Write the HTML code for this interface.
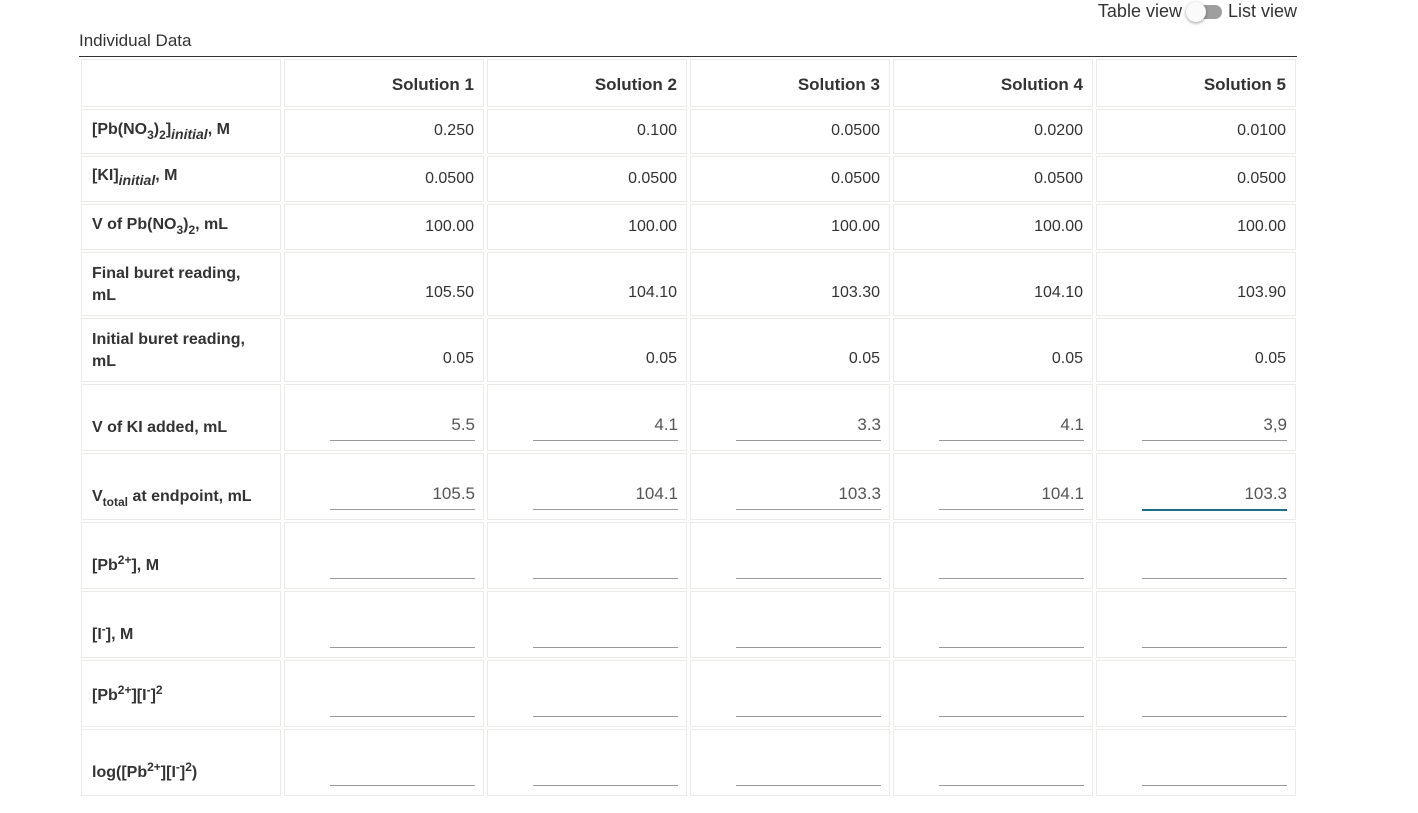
<!DOCTYPE html>
<html><head><meta charset="utf-8"><style>
body{margin:0;width:1418px;height:813px;background:#fff;font-family:"Liberation Sans",Roboto,sans-serif;color:#333;position:relative;overflow:hidden}
.top{position:absolute;top:1px;right:121px;font-size:18px;color:#333;display:flex;align-items:center}
.sw{display:inline-block;width:38px;height:20px;position:relative;margin:0 4px}
.sw .tr{position:absolute;left:6px;top:3px;width:30px;height:14px;border-radius:7px;background:#9e9e9e}
.sw .kn{position:absolute;left:0;top:0;width:20px;height:20px;border-radius:50%;background:#fafafa;box-shadow:0 1px 3px rgba(0,0,0,.4)}
.title{position:absolute;left:79px;top:31px;font-size:17px;color:#333}
.line{position:absolute;left:79px;top:56px;width:1218px;height:1px;background:#333}
table{position:absolute;left:78px;top:57px;border-collapse:separate;border-spacing:3px 2px;table-layout:fixed}
td{width:200px;box-sizing:border-box;border:1px solid #ecebe7;padding:0 9px 12px 10px;font-size:16px;line-height:20px;text-align:right;vertical-align:bottom;position:relative}
td.l{text-align:left;font-weight:bold;color:#333;vertical-align:middle;padding-bottom:0;padding-right:24px}
td.t{vertical-align:top;padding-top:10px;line-height:22px}
td.b{vertical-align:bottom;padding-bottom:12px}
th{width:200px;box-sizing:border-box;border:1px solid #ecebe7;text-align:right;padding:4px 9px 0 0;font-size:17px;font-weight:bold;color:#333}
.in{position:absolute;left:45px;right:8px;bottom:9px;height:28px;border-bottom:1px solid #999;text-align:right;color:#555;line-height:26px;font-size:17px}
.in.a{border-bottom:2px solid #1a6e85;bottom:8px}
sub{font-size:12px;vertical-align:-5px;line-height:0}
sup{font-size:12px;vertical-align:6px;line-height:0}
i{font-size:14px}
</style></head><body>
<div class="top">Table view<span class="sw"><span class="tr"></span><span class="kn"></span></span>List view</div>
<div class="title">Individual Data</div>
<div class="line"></div>
<table>
<tr style="height:48px"><th></th><th>Solution 1</th><th>Solution 2</th><th>Solution 3</th><th>Solution 4</th><th>Solution 5</th></tr>
<tr style="height:45px"><td class="l" style="padding-bottom:4px">[Pb(NO<sub>3</sub>)<sub>2</sub>]<sub><i>initial</i></sub>, M</td><td>0.250</td><td>0.100</td><td>0.0500</td><td>0.0200</td><td>0.0100</td></tr>
<tr style="height:46px"><td class="l" style="padding-bottom:6px">[KI]<sub><i>initial</i></sub>, M</td><td>0.0500</td><td>0.0500</td><td>0.0500</td><td>0.0500</td><td>0.0500</td></tr>
<tr style="height:46px"><td class="l" style="padding-bottom:4px">V of Pb(NO<sub>3</sub>)<sub>2</sub>, mL</td><td>100.00</td><td>100.00</td><td>100.00</td><td>100.00</td><td>100.00</td></tr>
<tr style="height:64px"><td class="l t">Final buret reading, mL</td><td>105.50</td><td>104.10</td><td>103.30</td><td>104.10</td><td>103.90</td></tr>
<tr style="height:64px"><td class="l t">Initial buret reading, mL</td><td>0.05</td><td>0.05</td><td>0.05</td><td>0.05</td><td>0.05</td></tr>
<tr style="height:67px"><td class="l b">V of KI added, mL</td><td><div class="in">5.5</div></td><td><div class="in">4.1</div></td><td><div class="in">3.3</div></td><td><div class="in">4.1</div></td><td><div class="in">3,9</div></td></tr>
<tr style="height:67px"><td class="l b">V<sub>total</sub> at endpoint, mL</td><td><div class="in">105.5</div></td><td><div class="in">104.1</div></td><td><div class="in">103.3</div></td><td><div class="in">104.1</div></td><td><div class="in a">103.3</div></td></tr>
<tr style="height:67px"><td class="l b">[Pb<sup>2+</sup>], M</td><td><div class="in"></div></td><td><div class="in"></div></td><td><div class="in"></div></td><td><div class="in"></div></td><td><div class="in"></div></td></tr>
<tr style="height:67px"><td class="l b">[I<sup>-</sup>], M</td><td><div class="in"></div></td><td><div class="in"></div></td><td><div class="in"></div></td><td><div class="in"></div></td><td><div class="in"></div></td></tr>
<tr style="height:67px"><td class="l b" style="padding-bottom:20px">[Pb<sup>2+</sup>][I<sup>-</sup>]<sup>2</sup></td><td><div class="in"></div></td><td><div class="in"></div></td><td><div class="in"></div></td><td><div class="in"></div></td><td><div class="in"></div></td></tr>
<tr style="height:67px"><td class="l b">log([Pb<sup>2+</sup>][I<sup>-</sup>]<sup>2</sup>)</td><td><div class="in"></div></td><td><div class="in"></div></td><td><div class="in"></div></td><td><div class="in"></div></td><td><div class="in"></div></td></tr>
</table>
</body></html>
